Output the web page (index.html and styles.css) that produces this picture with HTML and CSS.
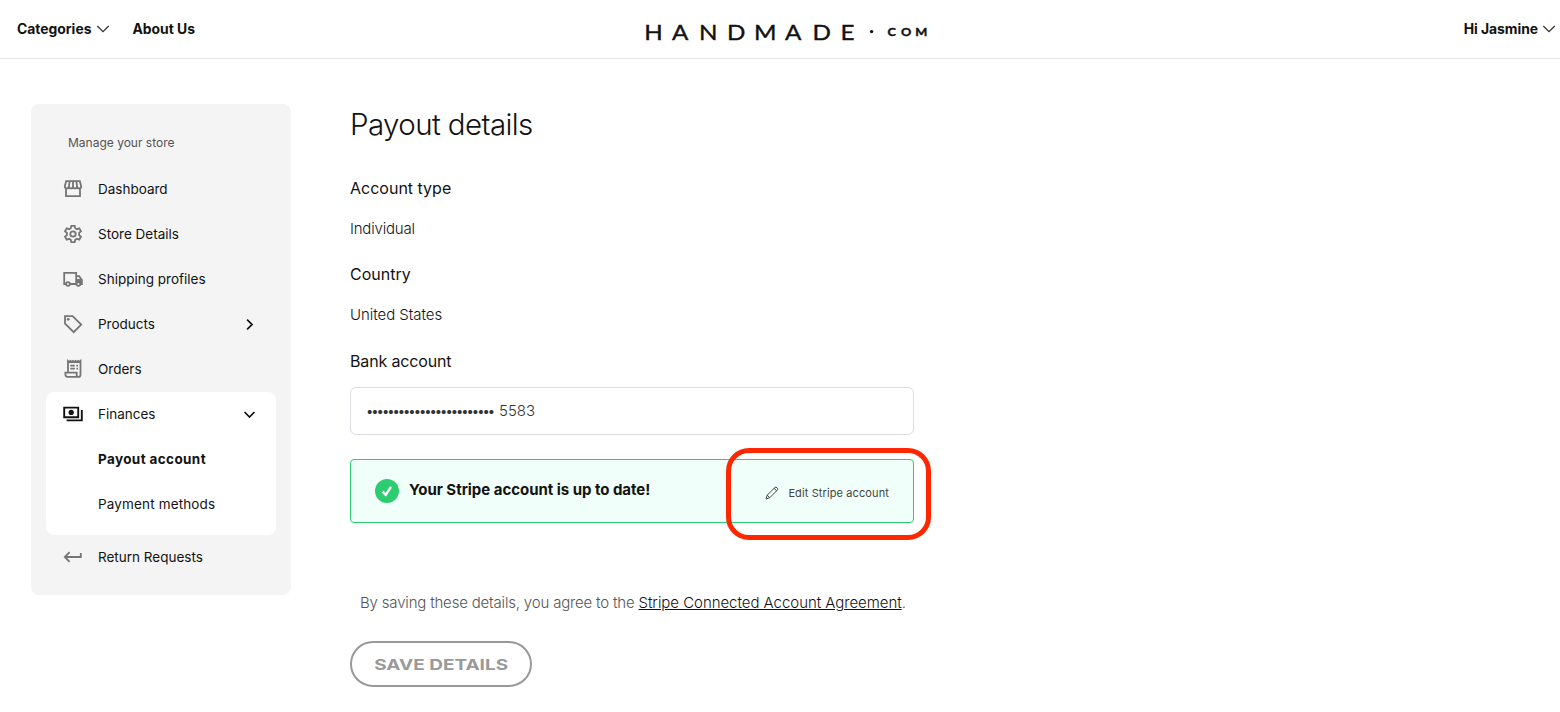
FILE: index.html
```
<!DOCTYPE html>
<html lang="en">
<head>
  <meta charset="UTF-8">
  <title>Payout details</title>
  <link rel="stylesheet" href="styles.css">
</head>
<body>

  <header class="topbar">
    <nav class="topbar-nav">
      <a class="nav-link" href="#">Categories
        <svg class="nav-arrow" width="14" height="8" viewBox="0 0 14 8"><path d="M1.3 1 7 6.6 12.7 1"/></svg>
      </a>
      <a class="nav-link" href="#">About Us</a>
    </nav>
    <a class="logo" href="#">
      <svg width="284" height="20" viewBox="0 0 284 20">
        <text class="logo-name" transform="scale(1.1 1)" y="17.6" x="-.6 24.6 49.2 74.6 99.1 127.4 152.3 177.8">HANDMADE</text>
        <circle cx="226.6" cy="9.6" r="1.7"/>
        <text class="logo-com" transform="scale(1.1 1)" y="13.8" x="220.5 232.8 245.6">COM</text>
      </svg>
    </a>
    <a class="nav-link user-menu" href="#">Hi Jasmine
      <svg class="nav-arrow" width="14" height="8" viewBox="0 0 14 8"><path d="M1.3 1 7 6.6 12.7 1"/></svg>
    </a>
  </header>

  <div class="page">
    <aside class="sidebar">
      <p class="sidebar-title">Manage your store</p>
      <a class="item" href="#">
        <svg class="icon" viewBox="0 0 20 20"><path d="M3 9v8.2h14V9M3.2 2.2h13.6l1.4 5c0 3-4 3-4.1 0 0 3-4.1 3-4.1 0 0 3-4.1 3-4.1 0 0 3-4.1 3-4.1 0zM6.6 2.5l-.7 5M10 2.5v5M13.4 2.5l.7 5"/></svg>
        <span>Dashboard</span>
      </a>
      <a class="item" href="#">
        <svg class="icon" viewBox="0 0 20 20"><path d="M8.3 1.8h3.4l.5 2.4 1.7 1 2.4-.9 1.7 2.9-1.9 1.7v2.2l1.9 1.7-1.7 2.9-2.4-.9-1.7 1-.5 2.4H8.3l-.5-2.4-1.7-1-2.4.9L2 12.8l1.9-1.7V8.9L2 7.2l1.7-2.9 2.4.9 1.7-1z"/><circle cx="10" cy="10" r="2.7"/></svg>
        <span>Store Details</span>
      </a>
      <a class="item" href="#">
        <svg class="icon" viewBox="0 0 20 20"><path d="M3 15H1.2V3.8h12v11.2H7M13.2 7.2h2.9l2.7 3.7V15h-1M13.2 11h5.6"/><path class="dot" d="M13.2 10.6h6V15h-1.6l-2.2-2-2.2 1z"/><circle class="wheel" cx="5" cy="15" r="1.9"/><circle class="wheel" cx="15.4" cy="15" r="1.9"/></svg>
        <span>Shipping profiles</span>
      </a>
      <a class="item" href="#">
        <svg class="icon" viewBox="0 0 20 20"><path d="M2 2.2h7.6l8.6 8.4-7.5 7.6L2 9.6z"/><circle class="dot" cx="5.2" cy="5.3" r="1.4"/></svg>
        <span>Products</span>
        <svg class="arrow" viewBox="0 0 12 12"><path d="M3.8 1.6 8.3 6l-4.5 4.4"/></svg>
      </a>
      <a class="item" href="#">
        <svg class="icon" viewBox="0 0 20 20"><path d="M5 13.6V2l1.2 1 1.3-1 1.3 1L10 2l1.3 1 1.3-1 1.3 1 1.3-1 1.3 1 1-1v13.7c0 3-3.8 3-3.8.2v-2.3H2.4v2c0 1.2.8 2.2 2 2.2h10.5M7.3 6.6h4.5M7.3 9.6h4.5M13.4 6.6H15M13.4 9.6H15"/></svg>
        <span>Orders</span>
      </a>
      <div class="group">
        <a class="item" href="#">
          <svg class="icon icon-dark" viewBox="0 0 20 20"><path d="M1.2 3.6h14v9.6h-14zM3.6 16.4h15.2V6"/><circle class="dot" cx="8.2" cy="8.4" r="2.6"/></svg>
          <span>Finances</span>
          <svg class="arrow" viewBox="0 0 12 12"><path d="M1.4 3.7 6 8.3l4.6-4.6"/></svg>
        </a>
        <a class="item sub active" href="#"><span>Payout account</span></a>
        <a class="item sub" href="#"><span>Payment methods</span></a>
      </div>
      <a class="item" href="#">
        <svg class="icon" viewBox="0 0 20 20"><path d="M6.6 5.2 1.8 10l4.8 4.8M1.8 10h16V6"/></svg>
        <span>Return Requests</span>
      </a>
    </aside>

    <main class="content">
      <h1>Payout details</h1>
      <h2>Account type</h2>
      <p class="value">Individual</p>
      <h2>Country</h2>
      <p class="value country">United States</p>
      <h2 class="bank">Bank account</h2>
      <div class="field"><span class="mask">••••••••••••••••••••••••</span><span>5583</span></div>

      <div class="notice">
        <svg class="check" viewBox="0 0 24 24"><circle cx="12" cy="12" r="12"/><path d="m7.6 12.6 3.1 3.2 5.3-8"/></svg>
        <strong>Your Stripe account is up to date!</strong>
        <a class="edit" href="#">
          <svg class="pencil" viewBox="0 0 14 14"><path d="M1 13 2.2 9.2 10 1.3c1-.9 3.4 1.3 2.6 2.5L4.8 11.7zM2.2 9.2l2.6 2.5M9 2.3l2.6 2.5"/></svg>
          <span>Edit Stripe account</span>
        </a>
        <div class="highlight"></div>
      </div>

      <p class="terms">By saving these details, you agree to the <a href="#">Stripe Connected Account Agreement</a>.</p>
      <button class="save"><span>SAVE DETAILS</span></button>
    </main>
  </div>

</body>
</html>
```
FILE: styles.css
```
* {
  box-sizing: border-box;
}

body {
  margin: 0;
  background: #fff;
  color: #121212;
  font-family: Inter, "Open Sans", sans-serif;
  font-size: 14px;
}

a {
  color: inherit;
  text-decoration: none;
}

h1, h2, p {
  margin: 0;
}

.topbar {
  display: flex;
  justify-content: space-between;
  height: 59px;
  padding: 0 4px 0 17px;
  border-bottom: 1px solid #e5e5e5;
}

.topbar-nav {
  display: flex;
  flex: 1;
  gap: 22px;
}

.nav-link {
  display: flex;
  align-items: center;
  height: 57px;
  gap: 5px;
  font-size: 13.9px;
  font-weight: 700;
}

.user-menu {
  flex: 1;
  justify-content: flex-end;
  gap: 4px;
  letter-spacing: -0.05px;
}

.nav-arrow {
  fill: none;
  stroke: #333;
  stroke-width: 1.3;
}

.logo {
  padding-top: 22px;
  fill: #121212;
}

.logo svg {
  display: block;
  overflow: visible;
}

.logo-name {
  font-family: Lato, sans-serif;
  font-size: 22px;
  stroke: #121212;
  stroke-width: 0.4;
}

.logo-com {
  font-family: Lato, sans-serif;
  font-weight: 700;
  font-size: 11.6px;
  stroke: #121212;
  stroke-width: 0.4;
}

.page {
  display: flex;
  align-items: flex-start;
  gap: 59px;
  padding: 45px 31px 0;
}

.sidebar {
  width: 260px;
  height: 491px;
  padding: 0 15px;
  border-radius: 8px;
  background: #f4f4f4;
}

.sidebar-title {
  padding: 28px 0 0 22px;
  height: 63px;
  color: #555;
  font-size: 12px;
  line-height: 22px;
}

.item {
  display: flex;
  align-items: center;
  height: 45px;
  padding: 0 20px 0 16px;
  font-size: 13.5px;
}

.item span {
  padding-bottom: 1px;
}

.icon {
  width: 20px;
  height: 20px;
  margin: 0 15.5px 1px 0.5px;
  fill: none;
  stroke: #757575;
  stroke-width: 1.8;
}

.icon .dot {
  fill: #757575;
  stroke: none;
}

.icon .wheel {
  fill: #f4f4f4;
}

.icon-dark {
  stroke: #121212;
  stroke-width: 1.9;
}

.icon-dark .dot {
  fill: #121212;
}

.arrow {
  width: 13px;
  height: 13px;
  margin-left: auto;
  fill: none;
  stroke: #121212;
  stroke-width: 1.6;
}

.group {
  height: 143px;
  border-radius: 8px;
  background: #fff;
}

.sub {
  padding-left: 52px;
  letter-spacing: 0.15px;
}

.active {
  font-weight: 700;
  letter-spacing: 0.38px;
}

.content {
  width: 564px;
}

h1 {
  height: 63px;
  font-size: 29.5px;
  font-weight: 300;
  letter-spacing: -0.6px;
  line-height: 41px;
}

h2 {
  font-size: 16px;
  font-weight: 400;
  line-height: 42px;
}

.bank {
  letter-spacing: -0.15px;
}

.value {
  height: 44px;
  font-size: 15px;
  font-weight: 300;
  letter-spacing: -0.2px;
  line-height: 39px;
}

.country {
  height: 45px;
  letter-spacing: -0.05px;
}

.field {
  display: flex;
  align-items: center;
  gap: 6px;
  height: 48px;
  margin-top: 5px;
  padding: 0 16px 1px;
  border: 1px solid #dddde3;
  border-radius: 6px;
  color: #333;
  font-size: 15px;
  font-weight: 300;
}

.mask {
  margin-left: -1px;
  font-size: 13px;
  font-weight: 400;
  letter-spacing: -2.02px;
}

.notice {
  position: relative;
  display: flex;
  align-items: center;
  height: 64px;
  margin-top: 24px;
  padding: 0 24px;
  border: 1px solid #2ecc71;
  border-radius: 4px;
  background: #f0fff9;
  font-size: 15px;
}

.notice strong {
  padding-bottom: 3px;
  letter-spacing: -0.03px;
}

.check {
  width: 24px;
  height: 24px;
  margin-right: 10px;
  fill: #2ecc71;
}

.check path {
  fill: none;
  stroke: #fff;
  stroke-width: 2.4;
}

.edit {
  display: flex;
  align-items: center;
  gap: 9px;
  margin-left: auto;
  padding-top: 3px;
  color: #444;
  font-size: 11px;
  letter-spacing: 0.11px;
}

.pencil {
  width: 14px;
  height: 14px;
  fill: none;
  stroke: #444;
  stroke-width: 1;
}

/* red frame around the edit link */
.highlight {
  position: absolute;
  top: -12px;
  right: -18px;
  width: 205px;
  height: 92px;
  border: 5px solid #ff2600;
  border-radius: 23px;
}

.terms {
  margin-top: 70px;
  padding-left: 10px;
  color: #555;
  font-size: 15px;
  font-weight: 300;
  letter-spacing: -0.18px;
  line-height: 20px;
  white-space: nowrap;
}

.terms a {
  color: #121212;
  letter-spacing: -0.04px;
  text-decoration: underline;
}

.save {
  display: flex;
  align-items: center;
  justify-content: center;
  width: 182px;
  height: 46px;
  margin-top: 28px;
  border: 2px solid #999;
  border-radius: 23px;
  background: #fff;
  color: #999;
  font-family: Inter, sans-serif;
  font-size: 14.5px;
  font-weight: 700;
}

/* extended letterforms */
.save span {
  transform: scaleX(1.31);
}
```
